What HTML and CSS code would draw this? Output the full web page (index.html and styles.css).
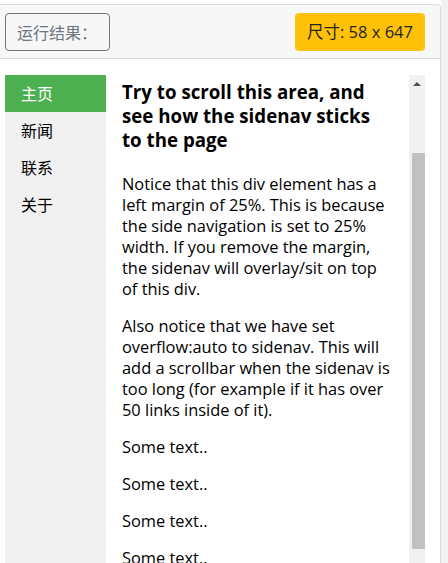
FILE: index.html
```html
<!DOCTYPE html>
<html lang="zh-CN">
<head>
<meta charset="utf-8">
<title>运行结果</title>
<link rel="stylesheet" href="styles.css">
</head>
<body>
<div class="page">
  <div class="card">
    <div class="card-header">
      <button class="btn-outline">运行结果：</button>
      <span class="badge">尺寸: 58 x 647</span>
    </div>
    <div class="card-body">
      <div class="frame">
        <ul class="sidenav">
          <li><a class="active" href="#">主页</a></li>
          <li><a href="#">新闻</a></li>
          <li><a href="#">联系</a></li>
          <li><a href="#">关于</a></li>
        </ul>
        <div class="main">
          <h3>Try to scroll this area, and see how the sidenav sticks to the page</h3>
          <p>Notice that this div element has a left margin of 25%. This is because the side navigation is set to 25% width. If you remove the margin, the sidenav will overlay/sit on top of this div.</p>
          <p>Also notice that we have set overflow:auto to sidenav. This will add a scrollbar when the sidenav is too long (for example if it has over 50 links inside of it).</p>
          <p>Some text..</p>
          <p>Some text..</p>
          <p>Some text..</p>
          <p>Some text..</p>
        </div>
        <div class="scrollbar">
          <div class="arrow"></div>
          <div class="thumb"></div>
        </div>
      </div>
    </div>
  </div>
  <div class="gutter"></div>
</div>
</body>
</html>
```

FILE: styles.css
```css
html, body {
  margin: 0;
  height: 100%;
  overflow: hidden;
  background: #fff;
}
body {
  font-family: "Open Sans", "Noto Sans CJK SC", sans-serif;
  color: #000;
}
.page {
  display: flex;
  height: 100%;
}
.card {
  width: 440px;
  margin-top: 4px;
  border: 1px solid #dcdcdc;
  border-left: none;
  border-bottom: none;
  border-top-right-radius: 4px;
  display: flex;
  flex-direction: column;
  overflow: hidden;
}
.gutter {
  flex: 1;
  background: #f1f1f1;
}
.card-header {
  height: 54px;
  box-sizing: border-box;
  background: #f7f7f7;
  border-bottom: 1px solid #d8d8d8;
  padding: 8px 15px 0 5px;
  display: flex;
  justify-content: space-between;
  align-items: flex-start;
}
.btn-outline {
  font-family: "Noto Sans CJK SC", sans-serif;
  font-size: 16px;
  line-height: 24px;
  height: 38px;
  padding: 6px 12px 6px 11px;
  color: #6c757d;
  background: transparent;
  border: 1px solid #6c757d;
  border-radius: 4px;
  margin: 0;
}
.badge {
  font-family: "Open Sans", "Noto Sans CJK SC", sans-serif;
  font-size: 16.5px;
  line-height: 24px;
  height: 38px;
  box-sizing: border-box;
  padding: 7px 12px;
  background: #ffc107;
  color: #212529;
  border-radius: 4px;
}
.card-body {
  flex: 1;
  padding: 16px 0 0 5px;
  display: flex;
  min-height: 0;
}
.frame {
  width: 420px;
  display: flex;
  overflow: hidden;
}
.sidenav {
  list-style: none;
  margin: 0;
  padding: 0;
  width: 101px;
  flex: none;
  background: #f1f1f1;
}
.sidenav a {
  display: block;
  padding: 8px 16px;
  line-height: 21px;
  font-size: 16px;
  font-family: "Noto Sans CJK SC", sans-serif;
  color: #000;
  text-decoration: none;
}
.sidenav a.active {
  background: #4caf50;
  color: #fff;
}
.main {
  flex: 1;
  padding: 5px 16px 0;
  font-size: 16.4px;
  line-height: 21px;
}
.main h3 {
  font-size: 18.72px;
  line-height: 24px;
  font-weight: 700;
  margin: 0 0 20.5px;
}
.main p {
  margin: 0 0 16px;
}
.scrollbar {
  width: 16px;
  flex: none;
  background: #f1f1f1;
  display: flex;
  flex-direction: column;
  align-items: center;
}
.arrow {
  margin-top: 7px;
  width: 0;
  height: 0;
  border-left: 4px solid transparent;
  border-right: 4px solid transparent;
  border-bottom: 4px solid #505050;
}
.thumb {
  margin-top: 67px;
  width: 13px;
  height: 396px;
  background: #c1c1c1;
  margin-left: 2px;
}
```
